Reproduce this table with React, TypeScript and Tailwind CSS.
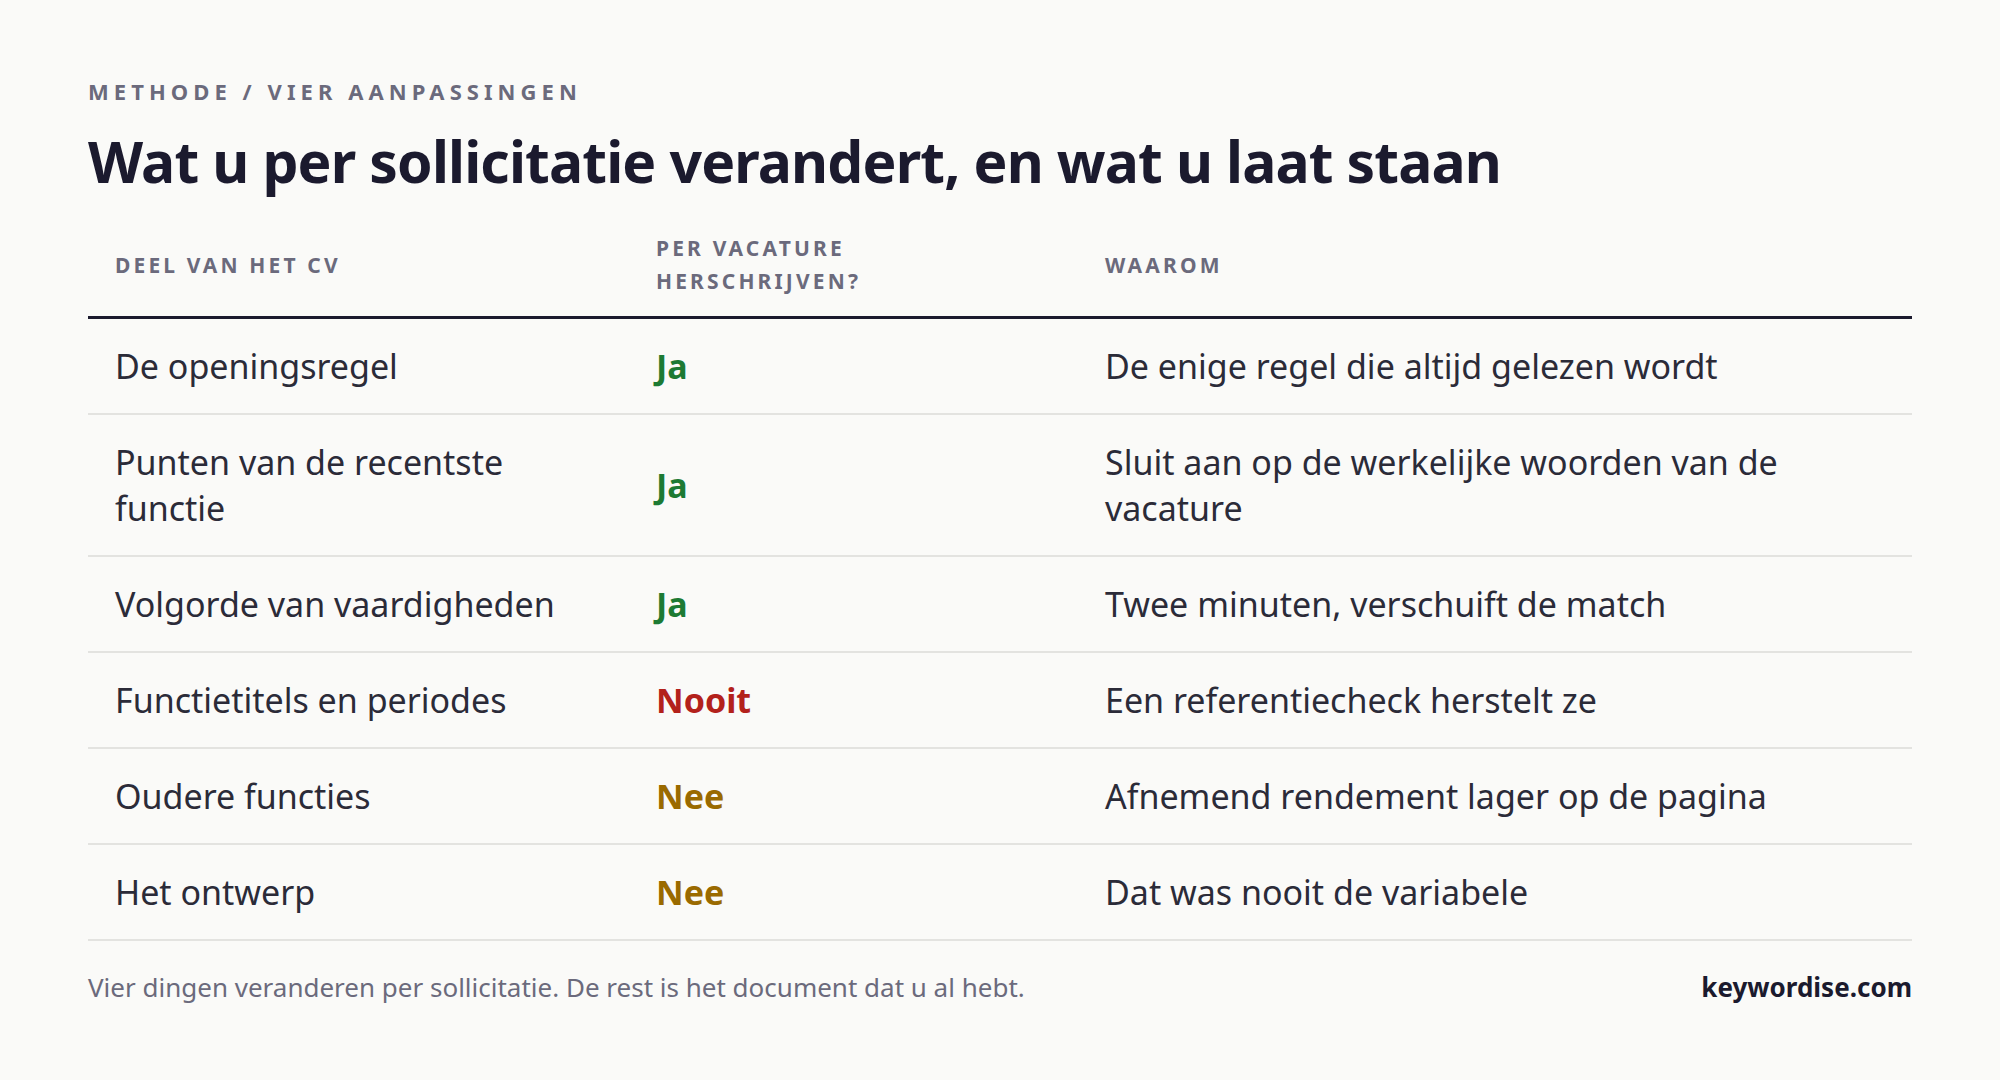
const rows = [
  { part: 'De openingsregel', verdict: 'Ja', tone: 'yes', why: 'De enige regel die altijd gelezen wordt' },
  { part: 'Punten van de recentste functie', verdict: 'Ja', tone: 'yes', why: 'Sluit aan op de werkelijke woorden van de vacature' },
  { part: 'Volgorde van vaardigheden', verdict: 'Ja', tone: 'yes', why: 'Twee minuten, verschuift de match' },
  { part: 'Functietitels en periodes', verdict: 'Nooit', tone: 'never', why: 'Een referentiecheck herstelt ze' },
  { part: 'Oudere functies', verdict: 'Nee', tone: 'no', why: 'Afnemend rendement lager op de pagina' },
  { part: 'Het ontwerp', verdict: 'Nee', tone: 'no', why: 'Dat was nooit de variabele' },
];

const toneClass: Record<string, string> = {
  yes: 'text-[#1d7a33]',
  never: 'text-[#b3211b]',
  no: 'text-[#9a6a00]',
};

export default function App() {
  return (
    <div className="min-h-screen bg-[#fafaf8] px-[88px] pt-[76px] font-['Noto_Sans',sans-serif] text-[#2b2b38]">
      <p className="text-[22px] font-bold uppercase leading-[30px] tracking-[0.23em] text-[#6b6a7c]">Methode / vier aanpassingen</p>
      <h1 className="mt-[19px] text-[57px] font-bold leading-[72px] tracking-[-0.015em] text-[#1b1a2e]">Wat u per sollicitatie verandert, en wat u laat staan</h1>

      <table className="mt-[19px] w-full table-fixed border-collapse">
        <colgroup>
          <col className="w-[541px]" />
          <col className="w-[449px]" />
          <col />
        </colgroup>
        <thead>
          <tr className="border-b-[3px] border-[#1b1a2e]">
            {['Deel van het cv', 'Per vacature herschrijven?', 'Waarom'].map((label) => (
              <th key={label} className="px-[27px] pt-[16px] pb-[18px] text-left align-middle text-[21px] font-bold uppercase leading-[33px] tracking-[0.15em] text-[#6b6a7c]">
                <span className={label.startsWith('Per') ? 'block max-w-[240px]' : ''}>{label}</span>
              </th>
            ))}
          </tr>
        </thead>
        <tbody>
          {rows.map((row) => (
            <tr key={row.part} className="border-b-2 border-[#e3e3e0]">
              <td className="px-[27px] py-[24px] align-middle text-[34px] leading-[46px]">{row.part}</td>
              <td className={`px-[27px] py-[24px] align-middle text-[34px] font-bold leading-[46px] ${toneClass[row.tone]}`}>{row.verdict}</td>
              <td className="px-[27px] py-[24px] align-middle text-[34px] leading-[46px]">{row.why}</td>
            </tr>
          ))}
        </tbody>
      </table>

      <div className="mt-[28px] flex items-center justify-between text-[26px] leading-[36px]">
        <p className="text-[#6b6a7c]">Vier dingen veranderen per sollicitatie. De rest is het document dat u al hebt.</p>
        <p className="font-bold text-[#1b1a2e]">keywordise.com</p>
      </div>
    </div>
  );
}
